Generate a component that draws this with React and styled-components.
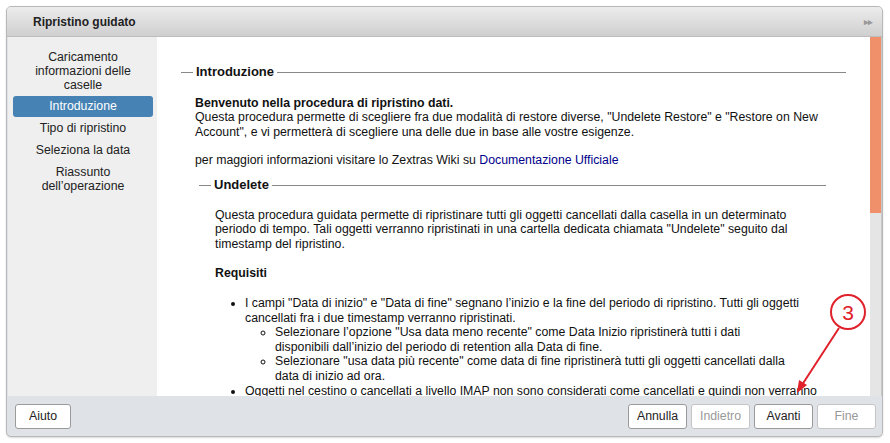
import React from "react";
import styled, { createGlobalStyle } from "styled-components";

const G = createGlobalStyle`
  body { margin: 0; background: #fff; font-family: "Liberation Sans", Arial, sans-serif; }
`;
const Page = styled.div`position: relative; width: 890px; height: 443px; padding: 6px 7px 0 6px; box-sizing: border-box;`;
const Win = styled.div`
  width: 877px; height: 431px; border: 1px solid #b8b8b8; border-radius: 5px; overflow: hidden;
  display: flex; flex-direction: column; background: #dfe3e8; box-sizing: border-box;
  box-shadow: 0 1px 2px rgba(0,0,0,0.15);
`;
const Title = styled.div`
  height: 29px; flex: none; display: flex; align-items: center; justify-content: space-between;
  padding: 0 10px 0 26px; background: linear-gradient(#ececec, #cfcfcf); border-bottom: 1px solid #bdbdbd;
  font-weight: bold; font-size: 12px; color: #222;
`;
const Arrows = styled.span`color: #999; font-size: 9px; letter-spacing: -1px;`;
const Body = styled.div`flex: 1; display: flex; min-height: 0; margin: 0 0 0 1px;`;
const Side = styled.div`
  width: 149px; flex: none; background: #efefef; padding-top: 9px; font-size: 12.3px; color: #222;
  display: flex; flex-direction: column; align-items: stretch; box-sizing: border-box; padding-left: 5px; padding-right: 4px;
`;
const Step = styled.div`
  text-align: center; line-height: 14px; padding: 4px 4px 4px;
  ${p => p.$active && `background: #4682b4; color: #fff; border-radius: 3px; padding: 3px 4px 4px;`}
`;
const Main = styled.div`flex: 1; background: #fff; display: flex; min-width: 0;`;
const Content = styled.div`flex: 1; padding: 28px 24px 0 24px; font-size: 12.3px; color: #111; line-height: 14.6px; overflow: hidden;`;
const Scroll = styled.div`width: 11px; flex: none; background: #e5e5e5; border-right: 1px solid #c8c8c8; display: flex; flex-direction: column;`;
const Thumb = styled.div`height: 176px; background: #f0906a;`;
const Legend = styled.div`
  display: flex; align-items: center; gap: 3px; font-weight: bold; font-size: 13px; margin: ${p => p.$m};
  &::before { content: ""; width: 12px; border-top: 1px solid #888; }
  &::after { content: ""; flex: 1; border-top: 1px solid #888; }
`;
const Block = styled.div`padding-left: ${p => p.$pl || 14}px; padding-right: ${p => p.$pr || 0}px;`;
const P = styled.p`margin: 0 0 ${p => p.$mb ?? 15}px;`;
const A = styled.a`color: #00008b; text-decoration: none;`;
const Ul = styled.ul`margin: 0; padding-left: 30px; padding-right: ${p => p.$pr || 0}px; list-style: ${p => p.$t || "disc"};`;
const Footer = styled.div`height: 40px; flex: none; display: flex; align-items: center; padding: 0 6px 0 8px; gap: 4px;`;
const Btn = styled.button`
  height: 25px; min-width: ${p => p.$w}px; border: 1px solid #a0a0a0; border-radius: 3px; background: #fff;
  font-family: "Liberation Sans", Arial, sans-serif; font-size: 12.3px; color: ${p => p.$dis ? "#999" : "#222"};
  border-color: ${p => p.$dis ? "#c4c4c4" : "#9a9a9a"}; padding: 0;
`;
const Spacer = styled.div`flex: 1;`;
const Overlay = styled.svg`position: absolute; left: 0; top: 0; pointer-events: none;`;

export default function App() {
  return (
    <Page>
      <G />
      <Win>
        <Title>Ripristino guidato<Arrows>▸▸</Arrows></Title>
        <Body>
          <Side>
            <Step>Caricamento informazioni delle caselle</Step>
            <Step $active>Introduzione</Step>
            <Step>Tipo di ripristino</Step>
            <Step>Seleziona la data</Step>
            <Step>Riassunto dell’operazione</Step>
          </Side>
          <Main>
            <Content>
              <Legend $m="0 0 16px">Introduzione</Legend>
              <Block>
                <P $mb={14}><b>Benvenuto nella procedura di ripristino dati.</b><br />
                  Questa procedura permette di scegliere fra due modalità di restore diverse, "Undelete Restore" e "Restore on New Account", e vi permetterà di scegliere una delle due in base alle vostre esigenze.</P>
                <P $mb={10}>per maggiori informazioni visitare lo Zextras Wiki su <A>Documentazione Ufficiale</A></P>
                <Block $pl={4} $pr={20}>
                  <Legend $m="0 0 15px">Undelete</Legend>
                  <Block $pl={16}>
                    <P>Questa procedura guidata permette di ripristinare tutti gli oggetti cancellati dalla casella in un determinato periodo di tempo. Tali oggetti verranno ripristinati in una cartella dedicata chiamata "Undelete" seguito dal timestamp del ripristino.</P>
                    <P><b>Requisiti</b></P>
                    <Ul>
                      <li>I campi "Data di inizio" e "Data di fine" segnano l’inizio e la fine del periodo di ripristino. Tutti gli oggetti cancellati fra i due timestamp verranno ripristinati.
                        <Ul $t="circle" $pr={30}>
                          <li>Selezionare l’opzione "Usa data meno recente" come Data Inizio ripristinerà tutti i dati disponibili dall’inizio del periodo di retention alla Data di fine.</li>
                          <li>Selezionare "usa data più recente" come data di fine ripristinerà tutti gli oggetti cancellati dalla data di inizio ad ora.</li>
                        </Ul>
                      </li>
                      <li>Oggetti nel cestino o cancellati a livello IMAP non sono considerati come cancellati e quindi non verranno ripristinati.</li>
                    </Ul>
                  </Block>
                </Block>
              </Block>
            </Content>
            <Scroll><Thumb /></Scroll>
          </Main>
        </Body>
        <Footer>
          <Btn $w={56}>Aiuto</Btn>
          <Spacer />
          <Btn $w={59}>Annulla</Btn>
          <Btn $w={59} $dis>Indietro</Btn>
          <Btn $w={59}>Avanti</Btn>
          <Btn $w={59} $dis>Fine</Btn>
        </Footer>
      </Win>
      <Overlay width="890" height="443">
        <circle cx="848" cy="312" r="17" fill="#fff" stroke="#e0202a" strokeWidth="2" />
        <text x="848" y="320" textAnchor="middle" fontSize="21" fill="#e0202a" fontFamily="Liberation Sans, Arial, sans-serif">3</text>
        <line x1="839" y1="328" x2="800" y2="388" stroke="#e0202a" strokeWidth="2" />
        <polygon points="797,393 799,380 807,385" fill="#e0202a" />
      </Overlay>
    </Page>
  );
}
